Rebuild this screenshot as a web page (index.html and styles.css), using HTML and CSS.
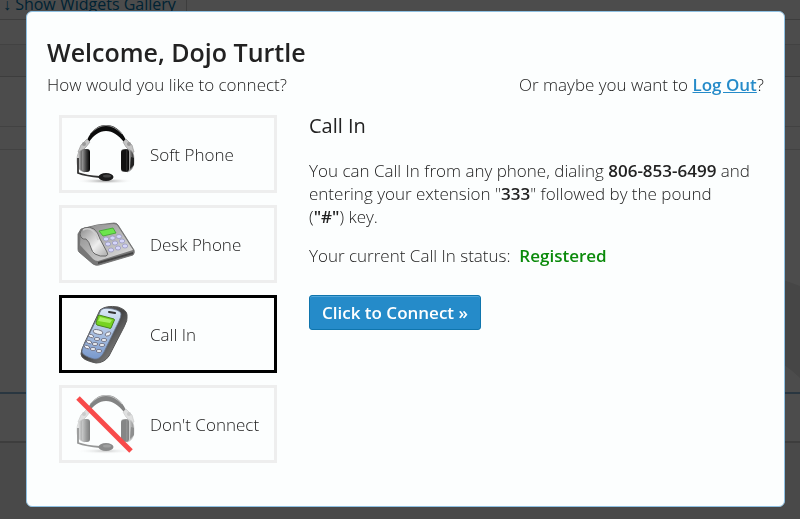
FILE: index.html
```html
<!DOCTYPE html>
<html lang="en">
<head>
    <meta charset="UTF-8">
    <meta name="viewport" content="width=device-width, initial-scale=1.0">
    <title>Connect</title>
    <link rel="stylesheet" href="styles.css">
</head>
<body>
    <div class="page">
        <div class="toolbar"><a href="#" class="gallery-link">↓ Show Widgets Gallery</a></div>
        <div class="strip"></div>
        <div class="strip tinted"></div>
        <div class="strip tall"></div>
        <div class="strip row"></div>
        <div class="content">
            <svg class="watermark" viewBox="0 0 60 120" aria-hidden="true">
                <path d="M0 0Q30 2 60 14V106Q38 84 0 72Z" fill="#e9e9e9"/>
            </svg>
        </div>
        <div class="tab-row"></div>
        <div class="footer"></div>
    </div>

    <div class="overlay">
        <div class="modal" role="dialog" aria-labelledby="modal-title">
            <h1 id="modal-title">Welcome, Dojo Turtle</h1>
            <div class="intro">
                <span>How would you like to connect?</span>
                <span>Or maybe you want to <a href="#">Log Out</a>?</span>
            </div>

            <div class="columns">
                <div class="options" role="radiogroup" aria-label="Connection type">
                    <label class="option">
                        <input type="radio" name="connection" value="soft">
                        <svg class="icon" viewBox="0 0 64 64" aria-hidden="true">
                            <defs>
                                <linearGradient id="cup">
                                    <stop offset="0" stop-color="#eee"/>
                                    <stop offset=".45" stop-color="#888"/>
                                    <stop offset="1" stop-color="#222"/>
                                </linearGradient>
                                <linearGradient id="pad">
                                    <stop offset="0" stop-color="#999"/>
                                    <stop offset=".6" stop-color="#333"/>
                                    <stop offset="1" stop-color="#000"/>
                                </linearGradient>
                                <radialGradient id="ground">
                                    <stop offset="0" stop-color="#999"/>
                                    <stop offset="1" stop-color="#fff" stop-opacity="0"/>
                                </radialGradient>
                                <g id="headset">
                                    <ellipse cx="32" cy="59" rx="29" ry="3" fill="url(#ground)"/>
                                    <path d="M14 18C19 7 26 3 33 3s15 4 20 15l-2 2C45 13 40 9 33 9S21 13 16 20Z" fill="#0b0b0b"/>
                                    <path d="M17 12Q33-5 49 12" fill="none" stroke="#888" stroke-width="1"/>
                                    <path d="M14 17l3 3-4 5-6 6-2-1 3-7ZM53 17l-3 3 3 5 6 6 2-1-2-7Z" fill="#c4c4c4" stroke="#999" stroke-width=".7"/>
                                    <circle cx="11" cy="22" r="2" fill="#999"/>
                                    <circle cx="56" cy="22" r="2" fill="#999"/>
                                    <path d="M12 27C5 28 4 33 4 39s2 10 8 11Z" fill="url(#cup)" stroke="#999" stroke-width=".6"/>
                                    <path d="M54 27c7 1 7 7 7 12s-2 10-7 11Z" fill="url(#cup)" stroke="#999" stroke-width=".6"/>
                                    <path d="M58 35l3 1v7l-4 4Z" fill="#222"/>
                                    <rect x="9" y="27" width="8" height="23" rx="3" fill="url(#pad)"/>
                                    <rect x="48" y="27" width="8" height="23" rx="3" fill="url(#pad)"/>
                                    <path d="M50 28h3v21h-3q-2 0-2-3V31q0-3 2-3Z" fill="#111"/>
                                    <path d="M5 36v15q8 3 22 4" fill="none" stroke="#333" stroke-width="1.800"/>
                                    <ellipse cx="33" cy="55" rx="7.500" ry="4" fill="#1b1b1b"/>
                                    <ellipse cx="34" cy="54" rx="4" ry="1.500" fill="#444"/>
                                </g>
                            </defs>
                            <use href="#headset"/>
                        </svg>
                        <span>Soft Phone</span>
                    </label>

                    <label class="option">
                        <input type="radio" name="connection" value="desk">
                        <svg class="icon" viewBox="0 0 64 64" aria-hidden="true">
                            <defs>
                                <linearGradient id="desk-top" x1="0" y1="0" x2="1" y2="1">
                                    <stop offset="0" stop-color="#888"/>
                                    <stop offset="1" stop-color="#e4e4e4"/>
                                </linearGradient>
                                <linearGradient id="handset" x1="0" y1="0" x2="1" y2="1">
                                    <stop offset="0" stop-color="#8a8a8a"/>
                                    <stop offset=".6" stop-color="#eee"/>
                                    <stop offset="1" stop-color="#aaa"/>
                                </linearGradient>
                            </defs>
                            <path d="M5 22l3-5 16-4 17-2q3 0 4 2l16 25q1 3-1 5L26 53q-3 1-6-1L6 40q-1-1-1-3Z" fill="#777" stroke="#666" stroke-width=".8"/>
                            <path d="M8 18l16-5 17-1 3 1 16 25-35 11q-3 0-5-2L7 33Z" fill="url(#desk-top)"/>
                            <path d="M25 50l35-10v2L25 52Z" fill="#444"/>
                            <path d="M26 19l14-3 3 5-13 3Z" fill="#6de44d" stroke="#3aa52c" stroke-width=".8"/>
                            <g fill="#d5d5fa" stroke="#9494bd" stroke-width=".7">
                                <ellipse cx="33" cy="27" rx="2.700" ry="2"/>
                                <ellipse cx="39.500" cy="26" rx="2.700" ry="2"/>
                                <ellipse cx="46" cy="24.500" rx="2.700" ry="2"/>
                                <ellipse cx="35" cy="32" rx="2.700" ry="2"/>
                                <ellipse cx="42" cy="31" rx="2.700" ry="2"/>
                                <ellipse cx="49" cy="29" rx="2.700" ry="2"/>
                                <ellipse cx="38" cy="38" rx="2.700" ry="2"/>
                                <ellipse cx="45" cy="36" rx="2.700" ry="2"/>
                                <ellipse cx="52" cy="34" rx="2.700" ry="2"/>
                            </g>
                            <path d="M7 22q0-4 4-6 6-2 10 1 4 3 6 10l7 13q2 3-1 4-6 1-11-2-3-2-4-6-2-7-5-9-5 1-6-5Z" fill="url(#handset)" stroke="#666"/>
                            <path d="M10 18q6-3 10 1 4 4 5 9" fill="none" stroke="#ccc" stroke-width="1.500"/>
                        </svg>
                        <span>Desk Phone</span>
                    </label>

                    <label class="option">
                        <input type="radio" name="connection" value="callin" checked>
                        <svg class="icon" viewBox="0 0 64 64" aria-hidden="true">
                            <defs>
                                <linearGradient id="mobile-side" x1="0" y1="0" x2="1" y2="1">
                                    <stop offset="0" stop-color="#777"/>
                                    <stop offset=".5" stop-color="#444"/>
                                    <stop offset="1" stop-color="#aaa"/>
                                </linearGradient>
                                <linearGradient id="mobile-front" x1="0" y1="0" x2="0" y2="1">
                                    <stop offset="0" stop-color="#dbe8f6"/>
                                    <stop offset="1" stop-color="#7898cc"/>
                                </linearGradient>
                            </defs>
                            <path d="M27 8q6-5 18-3 9 3 9 8 1 5-3 12L36 54q-5 7-13 7-15-3-15-9 0-4 4-12Z" fill="url(#mobile-side)" stroke="#555"/>
                            <path d="M28 8q3-3 12-1 8 2 8 5 0 3-2 7L31 50q-4 8-10 7-11-3-12-7 0-4 4-11Z" fill="url(#mobile-front)" stroke="#68758c" stroke-width=".8"/>
                            <path d="M36 10l6 1" stroke="#333" stroke-width="2" stroke-linecap="round"/>
                            <path d="M26 13l15 4q1 1 0 2l-3 7q-1 1-2 0l-12-3q-1-1-1-2l2-7Z" fill="#76d321" stroke="#48861b"/>
                            <path d="M27 15l12 3-2 3-12-2Z" fill="#a8f064"/>
                            <g fill="#eef1f5" stroke="#667" stroke-width=".8">
                                <ellipse cx="25" cy="30" rx="5" ry="2.200" transform="rotate(12 25 30)"/>
                                <ellipse cx="35" cy="32" rx="3" ry="1.800" transform="rotate(-25 35 32)"/>
                                <ellipse cx="18" cy="34" rx="2.800" ry="1.500" transform="rotate(20 18 34)"/>
                                <ellipse cx="24" cy="37" rx="2.800" ry="1.500"/>
                                <ellipse cx="31" cy="38" rx="2.800" ry="1.500"/>
                                <ellipse cx="16" cy="40" rx="2.800" ry="1.500" transform="rotate(20 16 40)"/>
                                <ellipse cx="22" cy="42" rx="2.800" ry="1.500"/>
                                <ellipse cx="29" cy="43" rx="2.800" ry="1.500"/>
                                <ellipse cx="14" cy="45" rx="2.800" ry="1.500" transform="rotate(20 14 45)"/>
                                <ellipse cx="20" cy="47" rx="2.800" ry="1.500"/>
                                <ellipse cx="26" cy="49" rx="2.800" ry="1.500"/>
                            </g>
                        </svg>
                        <span>Call In</span>
                    </label>

                    <label class="option">
                        <input type="radio" name="connection" value="none">
                        <svg class="icon" viewBox="0 0 64 64" aria-hidden="true">
                            <use href="#headset" opacity=".5"/>
                            <path d="M5 6l53 53" stroke="#f84a4a" stroke-width="5"/>
                        </svg>
                        <span>Don't Connect</span>
                    </label>
                </div>

                <div class="details">
                    <h2>Call In</h2>
                    <p>You can Call In from any phone, dialing <b>806-853-6499</b> and entering your extension "<b>333</b>" followed by the pound (<b>"#"</b>)&nbsp;key.</p>
                    <p>Your current Call In status: &nbsp;<span class="status">Registered</span></p>
                    <button type="button" class="connect-btn">Click to Connect »</button>
                </div>
            </div>
        </div>
    </div>
</body>
</html>
```
FILE: styles.css
```css
* {
    box-sizing: border-box;
}

body {
    margin: 0;
    font-family: "Open Sans", sans-serif;
    font-size: 17px;
    font-weight: 350;
    line-height: 23px;
    color: #222;
}

/* page behind the dialog */
.page {
    display: flex;
    flex-direction: column;
    height: 100vh;
    overflow: hidden;
    background-color: #fff;
}

.toolbar {
    height: 20px;
    flex-shrink: 0;
    display: flex;
    align-items: flex-end;
    border-bottom: 1px solid #ccc;
}

.gallery-link {
    padding: 0 10px 3px 3px;
    border-right: 1px solid #ccc;
    color: #0073aa;
    font-size: 16px;
    font-weight: 400;
    text-decoration: none;
}

.strip {
    height: 25px;
    flex-shrink: 0;
    border-bottom: 1px solid #ddd;
}

.strip.tinted {
    height: 32px;
    background-color: #f4f4f4;
    border-bottom-color: #ccc;
}

.strip.tall {
    height: 50px;
}

.strip.row {
    height: 23px;
}

.content {
    flex: 1;
    display: flex;
    justify-content: flex-end;
    align-items: flex-end;
    border-bottom: 2px solid #8ab4d8;
}

.watermark {
    width: 60px;
    height: 120px;
}

.tab-row {
    height: 49px;
    border-bottom: 2px solid #ccc;
}

.footer {
    height: 76px;
    background-color: #f4f4f4;
}

/* dialog */
.overlay {
    position: fixed;
    top: 0;
    right: 0;
    bottom: 0;
    left: 0;
    display: flex;
    padding: 11px 15px 12px 26px;
    background-color: rgba(0, 0, 0, 0.7);
}

.modal {
    flex: 1;
    padding: 27px 20px 20px;
    border: 1px solid #8fc1e3;
    border-radius: 6px;
    background-color: #fcfefe;
    overflow: auto;
}

h1 {
    margin: 0 0 8px;
    font-size: 25px;
    line-height: 26px;
    font-weight: 550;
}

.intro {
    display: flex;
    justify-content: space-between;
}

.intro a {
    color: #258bc9;
    font-weight: 600;
}

.columns {
    display: flex;
    gap: 32px;
    padding: 19px 8px 0 12px;
}

.options {
    display: flex;
    flex-direction: column;
    gap: 12px;
    width: 218px;
    flex-shrink: 0;
}

.option {
    display: flex;
    align-items: center;
    gap: 13px;
    padding: 4px 11px;
    border: 3px solid #eee;
    cursor: pointer;
}

.option:has(input:checked) {
    border-color: #000;
}

.option input {
    position: absolute;
    opacity: 0;
}

.icon {
    width: 64px;
    height: 64px;
    flex-shrink: 0;
}

.details {
    flex: 1;
}

h2 {
    margin: 0 0 22px;
    font-size: 20px;
    line-height: 22px;
    font-weight: 500;
}

p {
    margin: 0 0 16px;
}

b,
.status {
    font-weight: 600;
}

.status {
    color: #0a8a0a;
}

.connect-btn {
    height: 35px;
    margin-top: 12px;
    padding: 0 12px;
    border: 1px solid #0f75ad;
    border-radius: 3px;
    box-shadow: inset 0 1px 0 #51a6d9;
    background-color: #258bc9;
    color: #fff;
    font-family: "Open Sans", sans-serif;
    font-size: 17px;
    font-weight: 600;
    cursor: pointer;
}
```
